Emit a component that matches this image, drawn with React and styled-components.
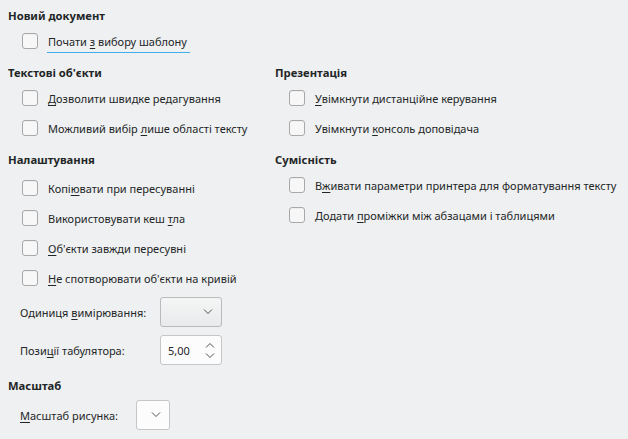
import React from "react";
import styled, { createGlobalStyle } from "styled-components";

const Global = createGlobalStyle`
  html, body { margin: 0; padding: 0; background: #eff0f1; }
  body { font-family: "Noto Sans", "DejaVu Sans", sans-serif; font-size: 11px; color: #232627; }
`;

const Page = styled.div`
  width: 628px;
  height: 439px;
  box-sizing: border-box;
  padding: 6px 0 0 8px;
  background: #eff0f1;
  overflow: hidden;
`;

const Columns = styled.div`
  display: grid;
  grid-template-columns: 267px 1fr;
  margin-top: ${(p) => p.$mt || 0}px;
`;

const Column = styled.div`
  display: flex;
  flex-direction: column;
`;

const Section = styled.section`
  display: flex;
  flex-direction: column;
  margin-top: ${(p) => p.$mt || 0}px;
`;

const Header = styled.div`
  height: 20px;
  line-height: 20px;
  font-size: 11.25px;
  font-weight: 700;
  white-space: nowrap;
`;

const Row = styled.label`
  display: flex;
  align-items: center;
  gap: 10px;
  height: 30px;
  padding-left: 14px;
  margin-top: ${(p) => p.$mt || 0}px;
  white-space: nowrap;
`;

const Box = styled.span`
  width: 14px;
  height: 14px;
  border: 1px solid #a6a8aa;
  border-radius: 3px;
  background: #f7f7f8;
  box-shadow: inset 0 1px 0 rgba(0, 0, 0, 0.03);
  flex: none;
`;

const Text = styled.span`
  position: relative;
  &::after {
    content: "";
    display: ${(p) => (p.$focus ? "block" : "none")};
    position: absolute;
    left: -1px;
    right: -3px;
    bottom: -4px;
    height: 1px;
    background: #3daee9;
  }
`;

const U = styled.span`
  text-decoration: underline;
  text-underline-offset: 2px;
`;

const Form = styled.div`
  display: grid;
  grid-template-columns: ${(p) => p.$label}px auto;
  align-items: center;
  row-gap: 8px;
  padding-left: 12px;
  margin-top: ${(p) => p.$mt || 0}px;
  justify-content: start;
`;

const FieldLabel = styled.span`
  white-space: nowrap;
`;

const Combo = styled.div`
  box-sizing: border-box;
  width: ${(p) => p.$w}px;
  height: 30px;
  border: 1px solid ${(p) => (p.$white ? "#c4c6c8" : "#b8babc")};
  border-radius: 3px;
  background: ${(p) =>
    p.$white ? "#fcfcfc" : "linear-gradient(#f4f5f5, #e9eaeb)"};
  display: flex;
  align-items: center;
  justify-content: flex-end;
  padding-right: 8px;
`;

const Spin = styled.div`
  box-sizing: border-box;
  width: 62px;
  height: 30px;
  border: 1px solid #c4c6c8;
  border-radius: 3px;
  background: #fcfcfc;
  display: flex;
  align-items: center;
  justify-content: space-between;
  padding: 0 6px 0 7px;
`;

const Arrows = styled.div`
  display: flex;
  flex-direction: column;
  gap: 5px;
`;

const Chevron = ({ up }) => (
  <svg width="10" height="6" viewBox="0 0 10 6">
    <path
      d={up ? "M1 5.5 L5 1.5 L9 5.5" : "M1 0.5 L5 4.5 L9 0.5"}
      fill="none"
      stroke="#4d5052"
      strokeWidth="1"
    />
  </svg>
);

const Check = ({ children, mt, focus }) => (
  <Row $mt={mt}>
    <Box />
    <Text $focus={focus}>{children}</Text>
  </Row>
);

export default function App() {
  return (
    <Page>
      <Global />
      <Section>
        <Header>Новий документ</Header>
        <Check focus>
          Почати <U>з</U> вибору шаблону
        </Check>
      </Section>
      <Columns $mt={7}>
        <Column>
          <Section>
            <Header>Текстові об'єкти</Header>
            <Check>
              <U>Д</U>озволити швидке редагування
            </Check>
            <Check>
              Можливий вибір <U>л</U>ише області тексту
            </Check>
          </Section>
          <Section $mt={7}>
            <Header>Налаштування</Header>
            <Check mt={3}>
              Копі<U>ю</U>вати при пересуванні
            </Check>
            <Check>
              Використовувати кеш <U>т</U>ла
            </Check>
            <Check>
              <U>О</U>б'єкти завжди пересувні
            </Check>
            <Check>
              <U>Н</U>е спотворювати об'єкти на кривій
            </Check>
            <Form $label={140} $mt={4}>
              <FieldLabel>
                Одиниця <U>в</U>имірювання:
              </FieldLabel>
              <Combo $w={62}>
                <Chevron />
              </Combo>
              <FieldLabel>
                Пози<U>ц</U>ії табулятора:
              </FieldLabel>
              <Spin>
                <span>5,00</span>
                <Arrows>
                  <Chevron up />
                  <Chevron />
                </Arrows>
              </Spin>
            </Form>
          </Section>
        </Column>
        <Column>
          <Section>
            <Header>Презентація</Header>
            <Check>
              <U>У</U>вімкнути дистанційне керування
            </Check>
            <Check>
              Увімкнути <U>к</U>онсоль доповідача
            </Check>
          </Section>
          <Section $mt={7}>
            <Header>Сумісність</Header>
            <Check>
              В<U>ж</U>ивати параметри принтера для форматування тексту
            </Check>
            <Check>
              Додати <U>п</U>роміжки між абзацами і таблицями
            </Check>
          </Section>
        </Column>
      </Columns>
      <Section $mt={11}>
        <Header>Масштаб</Header>
        <Form $label={116} $mt={4}>
          <FieldLabel>
            <U>М</U>асштаб рисунка:
          </FieldLabel>
          <Combo $w={34} $white>
            <Chevron />
          </Combo>
        </Form>
      </Section>
    </Page>
  );
}
